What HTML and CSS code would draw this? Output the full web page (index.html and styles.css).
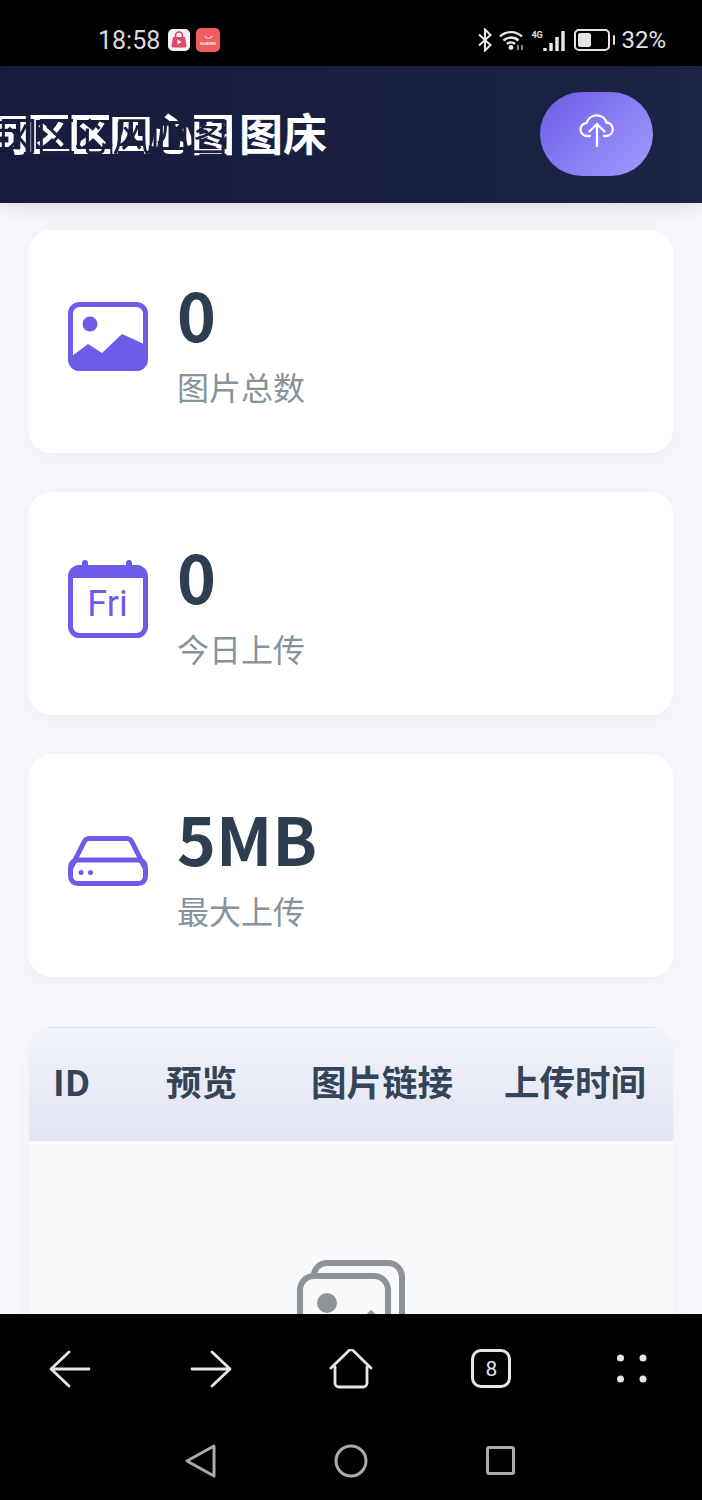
FILE: index.html
```html
<!DOCTYPE html>
<html lang="zh-CN">
<head>
<meta charset="utf-8">
<title>图床</title>
<link rel="stylesheet" href="styles.css">
</head>
<body>
<div class="phone">
  <div class="statusbar">
    <div class="status-left">
      <span class="time">18:58</span>
      <svg class="app-a" viewBox="0 0 22 22"><rect width="22" height="22" rx="5" fill="#f4f1f1"/><path d="M7.5 8V6.500a3.500 3.500 0 0 1 7 0V8" fill="none" stroke="#d8405f" stroke-width="1.600"/><path d="M5 8h12l1.500 9a1.500 1.500 0 0 1-1.500 1.500H5A1.500 1.500 0 0 1 3.500 17z" fill="#e2486b"/><path d="M9.500 10.500v5l4-2.500z" fill="#fff"/></svg>
      <span class="app-b"><svg class="smile" viewBox="0 0 10 4"><path d="M1 .5a4 3 0 0 0 8 0" fill="none" stroke="#fff" stroke-width="1"/></svg><span class="app-b-text">HUAWEI</span></span>
    </div>
    <div class="status-right">
      <svg class="ic-bt" viewBox="0 0 16 24"><path d="M2 6.500 13.500 17 8 22.500V1.500L13.500 7 2 17.500" fill="none" stroke="#e8e8e8" stroke-width="2"/></svg>
      <svg class="ic-wifi" viewBox="0 0 26 22"><path d="M1 7.500a16 16 0 0 1 22 0M4.500 11.500a11 11 0 0 1 15 0M8 15a6 6 0 0 1 8 0" fill="none" stroke="#e8e8e8" stroke-width="2.400"/><circle cx="12" cy="18.500" r="2.400" fill="#e8e8e8"/><path d="M19 16v5M23 16v5" stroke="#bbb" stroke-width="1.400"/></svg>
      <span class="signal">
        <span class="g4">4G</span>
        <svg class="ic-signal" viewBox="0 0 22 22"><path d="M2 18v3M8 13v8M14 7v14M20 1v20" stroke="#e8e8e8" stroke-width="3.400"/></svg>
      </span>
      <span class="battery"><span class="battery-fill"></span></span>
      <span class="battery-tip"></span>
      <span class="pct">32%</span>
    </div>
  </div>

  <header class="topbar">
    <h1 class="title"><span class="garble"><span class="garble-a">司区区四心图</span><span class="garble-b">冈区心风四图</span></span><span>图床</span></h1>
    <button class="upload" type="button" aria-label="上传">
      <svg class="upload-icon" viewBox="0 0 36 34"><path d="M11 23H8.500A6.500 6.500 0 0 1 7.500 10 10.500 10.500 0 0 1 27.500 9.500 6.800 6.800 0 0 1 28 23H25M18 33V11M10.500 18.500 18 11l7.500 7.500" fill="none" stroke="#fff" stroke-width="2.300" stroke-linecap="round" stroke-linejoin="round"/></svg>
    </button>
  </header>

  <main class="content">
    <section class="card">
      <svg class="card-icon" viewBox="0 0 80 69"><rect x="2.500" y="2.500" width="75" height="64" rx="9" fill="none" stroke="#6c5ce7" stroke-width="5"/><circle cx="22" cy="22" r="7.500" fill="#6c5ce7"/><path d="M4 54 20 42 34 51 54 32 76 42V59a8 8 0 0 1-8 8H12a8 8 0 0 1-8-8z" fill="#6c5ce7"/></svg>
      <div class="stat"><div class="num">0</div><div class="label">图片总数</div></div>
    </section>
    <section class="card">
      <svg class="card-icon" viewBox="0 0 80 78"><path d="M17 8V3M61 8V3" stroke="#6c5ce7" stroke-width="6" stroke-linecap="round"/><rect x="2.500" y="7.500" width="75" height="68" rx="9" fill="none" stroke="#6c5ce7" stroke-width="5"/><path d="M2.500 18V14a9 9 0 0 1 9-9h57a9 9 0 0 1 9 9v4z" fill="#6c5ce7"/><text class="fri" x="39.500" y="56" text-anchor="middle">Fri</text></svg>
      <div class="stat"><div class="num">0</div><div class="label">今日上传</div></div>
    </section>
    <section class="card">
      <svg class="card-icon" viewBox="0 0 80 50"><path d="M2.500 33 16 6a6 6 0 0 1 5-3.500h38a6 6 0 0 1 5 3.500l13.500 27" fill="none" stroke="#6c5ce7" stroke-width="5"/><rect x="2.500" y="24" width="75" height="23.500" rx="7" fill="none" stroke="#6c5ce7" stroke-width="5"/><circle cx="13" cy="36.500" r="2.500" fill="#6c5ce7"/><circle cx="22.500" cy="36.500" r="2.500" fill="#6c5ce7"/></svg>
      <div class="stat"><div class="num">5MB</div><div class="label">最大上传</div></div>
    </section>

    <section class="table">
      <div class="thead">
        <div>ID</div>
        <div>预览</div>
        <div>图片链接</div>
        <div>上传时间</div>
      </div>
      <div class="empty">
        <svg class="empty-icon" viewBox="0 0 108 96"><path d="M17 14a13 13 0 0 1 12-11h62a14 14 0 0 1 14 14v62" fill="none" stroke="#8f9296" stroke-width="6"/><rect x="3" y="16" width="88" height="76" rx="14" fill="none" stroke="#8f9296" stroke-width="6"/><circle cx="30" cy="43" r="10" fill="#8f9296"/><path d="M12 86 36 66 48 74 74 50 88 62V86z" fill="#8f9296"/></svg>
      </div>
    </section>
  </main>

  <footer class="navbars">
    <div class="browser-nav">
      <svg class="nav-ic" viewBox="0 0 44 40"><path d="M3 20H41M21 3 3 20 21 37" fill="none" stroke="#e6e6e6" stroke-width="2.800" stroke-linecap="round" stroke-linejoin="round"/></svg>
      <svg class="nav-ic" viewBox="0 0 44 40"><path d="M3 20H41M23 3 41 20 23 37" fill="none" stroke="#e6e6e6" stroke-width="2.800" stroke-linecap="round" stroke-linejoin="round"/></svg>
      <svg class="nav-ic" viewBox="0 0 44 40"><path d="M2 19 20 1.500a3 3 0 0 1 4 0L42 19M6 18V34a4 4 0 0 0 4 4H34a4 4 0 0 0 4-4V18" fill="none" stroke="#e6e6e6" stroke-width="2.800" stroke-linecap="round" stroke-linejoin="round"/></svg>
      <span class="tabs">8</span>
      <svg class="nav-ic" viewBox="0 0 44 40"><circle cx="10.500" cy="9" r="3.500" fill="#e6e6e6"/><circle cx="33" cy="9" r="3.500" fill="#e6e6e6"/><circle cx="10.500" cy="30" r="3.500" fill="#e6e6e6"/><circle cx="33" cy="30" r="3.500" fill="#e6e6e6"/></svg>
    </div>
    <div class="system-nav">
      <svg class="sys-ic" viewBox="0 0 34 34"><path d="M30 2 3 17 30 32z" fill="none" stroke="#aaa" stroke-width="3" stroke-linejoin="round"/></svg>
      <svg class="sys-ic" viewBox="0 0 34 34"><circle cx="17" cy="17" r="15" fill="none" stroke="#aaa" stroke-width="3"/></svg>
      <svg class="sys-ic" viewBox="0 0 34 34"><rect x="3.500" y="3.500" width="26" height="26" rx="1.500" fill="none" stroke="#aaa" stroke-width="3"/></svg>
    </div>
  </footer>
</div>
</body>
</html>
```

FILE: styles.css
```css
* { box-sizing: border-box; }
html, body { margin: 0; padding: 0; background: #000; }
body { font-family: "Noto Sans CJK SC", sans-serif; }

.phone { width: 702px; height: 1500px; display: flex; flex-direction: column; overflow: hidden; background: #f7f8fb; }

/* status bar */
.statusbar { flex: 0 0 66px; background: #000; color: #e4e4e4; display: flex; justify-content: space-between; align-items: center; padding: 14px 36px 0 98px; font-family: Roboto, sans-serif; }
.status-left, .status-right { display: flex; align-items: center; }
.time { font-size: 25px; width: 70px; color: #dcdcdc; }
.app-a { width: 22px; height: 22px; display: block; }
.app-b { width: 24px; height: 24px; border-radius: 5px; background: #ef5d5c; margin-left: 6px; display: flex; flex-direction: column; align-items: center; justify-content: center; gap: 2px; }
.smile { width: 9px; height: 4px; display: block; }
.app-b-text { font-size: 4px; line-height: 5px; color: #fff; font-family: "Liberation Sans", sans-serif; font-weight: 700; }
.ic-bt { width: 16px; height: 24px; display: block; }
.ic-wifi { width: 26px; height: 22px; margin-left: 6px; display: block; }
.signal { width: 34px; height: 24px; margin-left: 6px; display: flex; align-items: flex-end; }
.g4 { font-size: 9px; line-height: 14px; align-self: flex-start; font-weight: 700; width: 12px; flex: none; }
.ic-signal { width: 22px; height: 22px; display: block; flex: none; }
.battery { width: 36px; height: 22px; margin-left: 9px; border: 2px solid #e4e4e4; border-radius: 5px; padding: 2px; display: flex; }
.battery-fill { width: 13px; background: #e4e4e4; border-radius: 2px; }
.battery-tip { width: 2px; height: 10px; background: #e4e4e4; margin-left: 3px; border-radius: 1px; }
.pct { font-size: 24px; margin-left: 6px; color: #e4e4e4; }

/* top bar */
.topbar { flex: 0 0 137px; background: linear-gradient(90deg, #171b3c, #1a2444); display: flex; justify-content: space-between; align-items: center; padding: 0 49px 2px 0; box-shadow: 0 4px 22px rgba(0, 0, 0, .12); position: relative; z-index: 1; }
.title { margin: 0 0 4px; display: flex; color: #fff; font-size: 44px; line-height: 60px; font-weight: 700; font-family: "Noto Sans CJK SC", sans-serif; }
.garble { width: 239px; overflow: hidden; display: block; white-space: nowrap; position: relative; filter: blur(.5px); }
.garble-a { display: block; letter-spacing: -3px; margin-left: -14px; }
.garble-b { position: absolute; top: 2px; left: -2px; letter-spacing: -2px; color: #1a1f40; font-weight: 400; font-size: 40px; }
.upload { width: 113px; height: 84px; border: 0; border-radius: 42px; background: linear-gradient(135deg, #6c5ce7, #a29bfe); display: flex; align-items: center; justify-content: center; padding: 0 0 8px; }
.upload-icon { width: 36px; height: 34px; display: block; }

/* content */
.content { flex: 1; min-height: 0; overflow: hidden; padding: 27px 29px 0; display: flex; flex-direction: column; gap: 39px; }
.card { flex: 0 0 223px; background: #fff; border-radius: 22px; box-shadow: 0 4px 20px rgba(40, 50, 90, .05); display: flex; align-items: center; gap: 30px; padding-left: 39px; }
.card-icon { width: 80px; display: block; flex: none; margin-bottom: 10px; }
.stat { display: flex; flex-direction: column; margin-left: -1px; }
.num { font-size: 66px; line-height: 78px; font-weight: 700; color: #2d3e50; font-family: "Noto Sans CJK SC", sans-serif; }
.label { font-size: 32px; line-height: 46px; margin-top: 11px; color: #86939a; font-family: "Noto Sans CJK SC", sans-serif; }
.fri { font-family: Roboto, sans-serif; font-size: 36px; fill: #6c5ce7; }

/* table */
.table { flex: none; margin-top: 11px; border-radius: 22px 22px 0 0; box-shadow: 0 4px 24px rgba(40, 50, 90, .05); background: #f8f9fb; }
.thead { height: 114px; border-radius: 22px 22px 0 0; border-bottom: 1px solid #dfe2ee; background: linear-gradient(180deg, #dcdfe8 1px, #f1f3fa 1px, #e1e4f2); display: grid; grid-template-columns: 113px 145px 193px 1fr; align-items: center; padding: 0 0 6px 24px; font-size: 35.500px; font-weight: 700; color: #34455a; font-family: "Noto Sans CJK SC", sans-serif; white-space: nowrap; }
.empty { height: 400px; padding-top: 119px; display: flex; justify-content: center; }
.empty-icon { width: 108px; height: 96px; display: block; }

/* bottom bars */
.navbars { flex: 0 0 186px; background: #000; position: relative; z-index: 2; }
.browser-nav { height: 110px; display: grid; grid-template-columns: repeat(5, 1fr); justify-items: center; padding-top: 35px; align-content: start; }
.nav-ic { width: 44px; height: 40px; display: block; }
.tabs { width: 40px; height: 39px; border: 3px solid #e6e6e6; border-radius: 10px; color: #e6e6e6; display: flex; align-items: center; justify-content: center; font-size: 21px; font-family: Roboto, sans-serif; }
.system-nav { display: flex; justify-content: center; gap: 116px; padding-top: 20px; }
.sys-ic { width: 34px; height: 34px; display: block; }
```
